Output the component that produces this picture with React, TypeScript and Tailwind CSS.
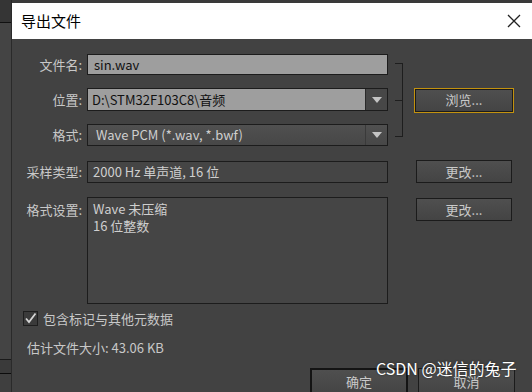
import React from 'react';

const font = "font-['Noto_Sans_CJK_SC',sans-serif]";

const Arrow = () => (
  <svg width="10" height="6" viewBox="0 0 10 6">
    <path d="M0 0 H10 L5 6 Z" fill="#c4c4c4" />
  </svg>
);

const Btn = ({ label, gold = false }: { label: string; gold?: boolean }) => (
  <div className={gold ? 'border border-[#c3920f]' : ''}>
    <div
      className={`flex h-[23px] items-center justify-center border border-[#1b1b1b] bg-gradient-to-b from-[#4f4f4f] to-[#444444] text-[13px] text-[#c9c9c9] ${
        gold ? 'w-[98px]' : 'w-[96px]'
      }`}
    >
      {label}
    </div>
  </div>
);

const Label = ({ text }: { text: string }) => (
  <div className="w-[70px] shrink-0 text-right text-[13px] text-[#c8c8c8]">{text}</div>
);

export default function App() {
  return (
    <div className={`flex h-[392px] w-[532px] overflow-hidden bg-[#424242] ${font}`}>
      {/* background window strip */}
      <div className="flex w-[11px] shrink-0 flex-col bg-[#3c3c3c]">
        <div className="h-[22px] shrink-0 bg-[#353535]" />
        <div className="h-px shrink-0 bg-[#111]" />
        <div className="h-[336px] shrink-0 bg-[#444]" />
        <div className="h-px shrink-0 bg-[#1a1a1a]" />
        <div className="h-[13px] shrink-0 bg-[#3a3a3a]" />
        <div className="h-px shrink-0 bg-[#0c0c0c]" />
        <div className="flex-1 bg-[#3f3f3f]" />
      </div>

      <div className="relative flex flex-1 flex-col border-l border-[#2a2a2a]">
        <div className="h-[3px] shrink-0 bg-[#3a3a3a]" />
        {/* title bar */}
        <div className="flex h-[36px] shrink-0 items-center justify-between bg-white pl-[9px] pr-[10px]">
          <span className="text-[15px] text-black">导出文件</span>
          <svg width="14" height="14" viewBox="0 0 14 14" className="mr-[1px]">
            <path d="M1 1 L13 13 M13 1 L1 13" stroke="#222" strokeWidth="1.3" />
          </svg>
        </div>

        {/* body */}
        <div className="flex shrink-0 flex-col pt-[15px]">
          <div className="flex shrink-0 items-center">
            <div className="flex flex-col gap-[13px]">
              <div className="flex items-center">
                <Label text="文件名:" />
                <div className="ml-[5px] flex h-[21px] w-[301px] items-center border border-[#1c1c1c] bg-[#9e9e9e] pl-[6px] text-[13px] text-[#111]">
                  sin.wav
                </div>
              </div>
              <div className="flex items-center">
                <Label text="位置:" />
                <div className="ml-[5px] flex h-[23px] w-[301px] border border-[#1c1c1c] bg-[#9e9e9e]">
                  <div className="flex flex-1 items-center pl-[4px] text-[13px] text-[#111]">D:\STM32F103C8\音频</div>
                  <div className="flex w-[22px] items-center justify-center border-l border-[#2a2a2a] bg-[#474747]">
                    <Arrow />
                  </div>
                </div>
              </div>
              <div className="flex items-center">
                <Label text="格式:" />
                <div className="ml-[5px] flex h-[22px] w-[301px] border border-[#1c1c1c] bg-gradient-to-b from-[#505050] to-[#474747]">
                  <div className="flex flex-1 items-center pl-[8px] text-[13px] text-[#cfcfcf]">Wave PCM (*.wav, *.bwf)</div>
                  <div className="flex w-[22px] items-center justify-center border-l border-[#3a3a3a]">
                    <Arrow />
                  </div>
                </div>
              </div>
            </div>
            <div className="ml-[7px] flex h-[74px] w-[8px] items-center border-y border-r border-[#1e1e1e]">
              <div className="h-px w-full bg-[#1e1e1e]" />
            </div>
            <div className="ml-[11px]">
              <Btn label="浏览..." gold />
            </div>
          </div>

          <div className="mt-[14px] flex shrink-0 items-center">
            <Label text="采样类型:" />
            <div className="ml-[5px] flex h-[22px] w-[301px] items-center border border-[#1c1c1c] bg-[#454545] pl-[5px] text-[13px] text-[#cfcfcf]">
              2000 Hz 单声道, 16 位
            </div>
            <div className="ml-[28px]">
              <Btn label="更改..." />
            </div>
          </div>

          <div className="mt-[14px] flex shrink-0 items-start">
            <div className="pt-[3px]">
              <Label text="格式设置:" />
            </div>
            <div className="ml-[5px] h-[107px] w-[301px] border border-[#1c1c1c] bg-[#454545] pl-[5px] pt-[2px] text-[13px] leading-[17px] text-[#cfcfcf]">
              <div className="h-[17px]">Wave 未压缩</div>
              <div className="h-[17px]">16 位整数</div>
            </div>
            <div className="ml-[28px] mt-[1px]">
              <Btn label="更改..." />
            </div>
          </div>

          <div className="mt-[5px] flex h-[19px] shrink-0 items-center pl-[11px]">
            <div className="flex h-[15px] w-[15px] items-center justify-center border border-[#1e1e1e] bg-[#3a3a3a]">
              <svg width="13" height="13" viewBox="0 0 13 13">
                <path d="M2 6.5 L5 10 L11.5 1.5" stroke="#d6d6d6" strokeWidth="1.8" fill="none" />
              </svg>
            </div>
            <span className="ml-[5px] text-[13px] text-[#c8c8c8]">包含标记与其他元数据</span>
          </div>

          <div className="mt-[10px] h-[19px] shrink-0 pl-[15px] text-[13px] leading-[19px] text-[#c8c8c8]">估计文件大小: 43.06 KB</div>

          <div className="mt-[11px] flex shrink-0 pl-[298px]">
            <div className="flex h-[28px] w-[98px] items-center justify-center border-2 border-[#141414] bg-gradient-to-b from-[#4f4f4f] to-[#444444] text-[13px] text-[#c9c9c9]">
              确定
            </div>
            <div className="ml-[10px] flex h-[28px] w-[97px] items-center justify-center border border-[#1b1b1b] bg-gradient-to-b from-[#4f4f4f] to-[#444444] text-[13px] text-[#c9c9c9]">
              取消
            </div>
          </div>
        </div>

        {/* watermark */}
        <div className="absolute left-[364px] top-[358px] text-[16px] leading-[20px] text-white [text-shadow:0_0_2px_#222]">
          CSDN @迷信的兔子
        </div>
      </div>
    </div>
  );
}
